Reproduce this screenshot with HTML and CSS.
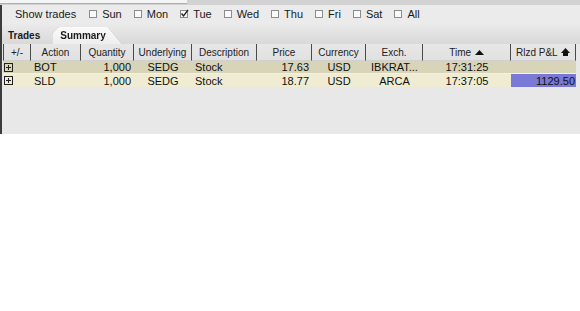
FILE: index.html
```html
<!DOCTYPE html>
<html lang="en">
<head>
  <meta charset="UTF-8">
  <title>Trades</title>
  <link rel="stylesheet" href="styles.css">
</head>
<body>
<div class="top-strip"><div class="top-box"></div></div>
<div class="panel">
  <div class="filter">
    <span class="filter-label">Show trades</span>
    <label class="day"><span class="cb"></span>Sun</label>
    <label class="day"><span class="cb"></span>Mon</label>
    <label class="day"><span class="cb checked"><svg width="9" height="9" viewBox="0 0 9 9"><path d="M1.5 4.5 L3.5 7 L8 1" fill="none" stroke="#222" stroke-width="1.3"/></svg></span>Tue</label>
    <label class="day"><span class="cb"></span>Wed</label>
    <label class="day"><span class="cb"></span>Thu</label>
    <label class="day"><span class="cb"></span>Fri</label>
    <label class="day"><span class="cb"></span>Sat</label>
    <label class="day"><span class="cb"></span>All</label>
  </div>
  <div class="tabs">
    <span class="tab">Trades</span>
    <span class="tab-wrap"><span class="tab active">Summary</span></span>
  </div>
  <table class="grid">
    <colgroup>
      <col style="width:28px"><col style="width:50px"><col style="width:53px"><col style="width:58px">
      <col style="width:65px"><col style="width:55px"><col style="width:54px"><col style="width:57px">
      <col style="width:88px"><col style="width:65px">
    </colgroup>
    <thead>
      <tr>
        <th class="first">+/-</th>
        <th>Action</th>
        <th>Quantity</th>
        <th>Underlying</th>
        <th>Description</th>
        <th>Price</th>
        <th>Currency</th>
        <th>Exch.</th>
        <th>Time <svg class="sort" width="9" height="5" viewBox="0 0 9 5"><path d="M0 5 L4.5 0 L9 5 Z" fill="#111"/></svg></th>
        <th>Rlzd P&amp;L <svg class="sort2" width="9" height="8" viewBox="0 0 9 8"><path d="M0 5 L4.5 0 L9 5 Z" fill="#111"/><rect x="2" y="5" width="5" height="3" fill="#111"/></svg></th>
      </tr>
    </thead>
    <tbody>
      <tr class="row-a">
        <td class="exp"><svg class="plus" width="9" height="9" viewBox="0 0 9 9"><rect x="0.5" y="0.5" width="8" height="8" fill="none" stroke="#222"/><path d="M4.5 2 V7 M2 4.5 H7" stroke="#222"/></svg></td>
        <td>BOT</td>
        <td class="num">1,000</td>
        <td class="mid">SEDG</td>
        <td>Stock</td>
        <td class="num">17.63</td>
        <td class="mid">USD</td>
        <td class="mid">IBKRAT...</td>
        <td class="mid">17:31:25</td>
        <td class="num"></td>
      </tr>
      <tr class="row-b">
        <td class="exp"><svg class="plus" width="9" height="9" viewBox="0 0 9 9"><rect x="0.5" y="0.5" width="8" height="8" fill="none" stroke="#222"/><path d="M4.5 2 V7 M2 4.5 H7" stroke="#222"/></svg></td>
        <td>SLD</td>
        <td class="num">1,000</td>
        <td class="mid">SEDG</td>
        <td>Stock</td>
        <td class="num">18.77</td>
        <td class="mid">USD</td>
        <td class="mid">ARCA</td>
        <td class="mid">17:37:05</td>
        <td class="num pnl">1129.50</td>
      </tr>
    </tbody>
  </table>
</div>
</body>
</html>
```

FILE: styles.css
```css
html, body {
  margin: 0;
  padding: 0;
  background: #fff;
  font-family: "Liberation Sans", Arial, sans-serif;
  color: #1a1a1a;
}
.top-strip {
  height: 5px;
  background: #d2d2d2;
}
.top-box {
  width: 187px;
  height: 3px;
  background: #f4f5f7;
  border-bottom: 1px solid #9fb2cb;
}
.panel {
  height: 129px;
  background: #e8e8e8;
  border-left: 2px solid #3c3c3c;
  box-sizing: border-box;
  width: 580px;
}
.filter {
  height: 17px;
  display: flex;
  align-items: center;
  gap: 12px;
  padding-left: 13px;
  background: #ebebeb;
  font-size: 11px;
}
.filter-label {
  margin-right: 1px;
}
.day {
  display: flex;
  align-items: center;
}
.cb {
  width: 8px;
  height: 8px;
  box-sizing: border-box;
  border: 1px solid #8c8c8c;
  background: #fafafa;
  margin-right: 5px;
  position: relative;
}
.cb svg {
  position: absolute;
  left: -1px;
  top: -2px;
}
.tabs {
  height: 22px;
  display: flex;
  align-items: flex-end;
  background: linear-gradient(#ececec, #e4e4e4 40%, #d9d9d9);
  font-size: 10px;
  font-weight: bold;
}
.tab {
  height: 17px;
  line-height: 17px;
  padding: 0 10px 0 6px;
}
.tab-wrap {
  filter: drop-shadow(0 0 0.6px #8f8f8f);
  margin-left: 2px;
}
.tab.active {
  display: block;
  padding: 0 16px 0 8px;
  background: linear-gradient(#fafafa, #eeeeee);
  border-top-left-radius: 8px;
  clip-path: polygon(0 100%, 0 40%, 6px 0, calc(100% - 14px) 0, 100% 100%);
}
.grid {
  table-layout: fixed;
  border-collapse: separate;
  border-spacing: 0;
  width: 573px;
  margin-left: 1px;
}
.grid th {
  height: 16px;
  padding: 0;
  font-size: 10px;
  font-weight: normal;
  text-align: center;
  color: #222;
  background: linear-gradient(#e7e7e7, #e1e1e1);
  border-right: 1px solid #4a4a4a;
  border-bottom: 1px solid #d0d0d0;
  white-space: nowrap;
  overflow: hidden;
}
.grid th.first {
  border-left: 1px solid #4a4a4a;
}
.sort {
  margin-left: 1px;
  vertical-align: 1px;
}
.sort2 {
  margin-left: 1px;
  vertical-align: 0;
}
.grid td {
  padding: 0 3px;
  height: 12px;
  line-height: 12px;
  font-size: 11px;
  white-space: nowrap;
  overflow: hidden;
  color: #111;
}
.row-a td {
  background: #d7d4b8;
  border-bottom: 1px solid #f3f1e4;
}
.row-b td {
  background: #efecd3;
  height: 13px;
}
.grid td.exp {
  padding: 0 0 0 1px;
  vertical-align: middle;
}
.plus {
  display: block;
}
.grid td.num {
  text-align: right;
}
.grid td.mid {
  text-align: center;
}
.grid td.pnl {
  background: #7b79d6;
  padding-right: 1px;
}
```
